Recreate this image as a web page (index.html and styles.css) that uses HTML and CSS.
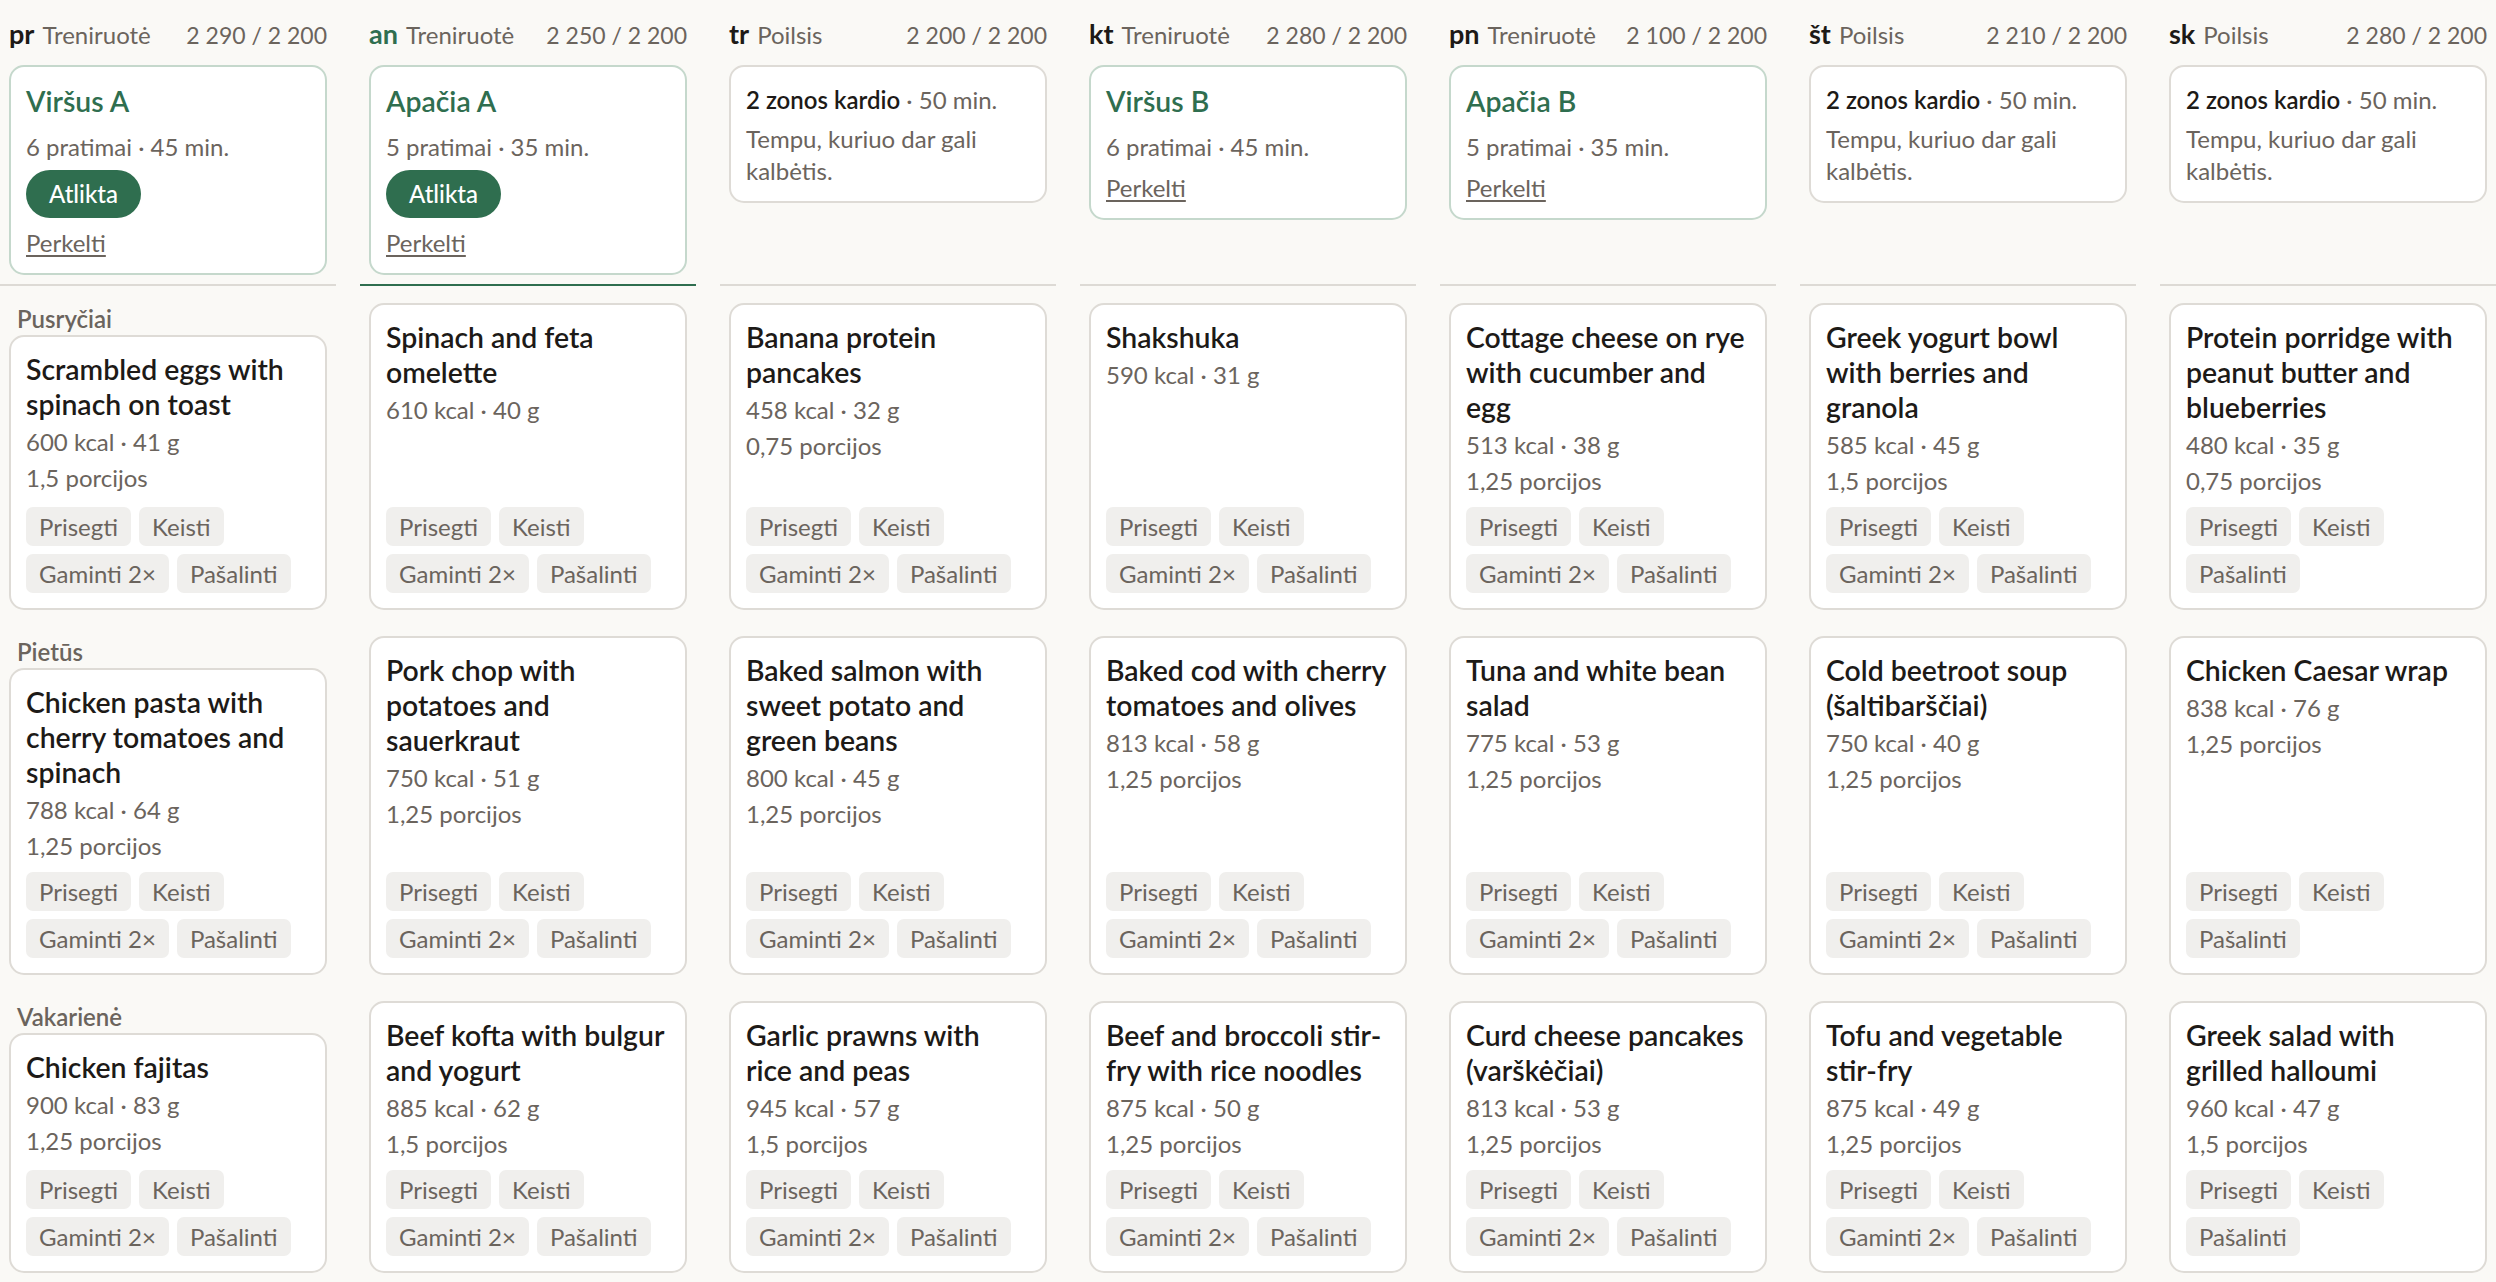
FILE: index.html
```html
<!DOCTYPE html>
<html lang="lt">
<head>
	<meta charset="UTF-8">
	<meta name="viewport" content="width=device-width, initial-scale=1.0">
	<title>Savaitės planas</title>
	<link rel="stylesheet" href="styles.css">
</head>
<body>
	<main class="week">
		<!-- Dienų antraštės ir treniruotės -->
		<section class="day-top">
			<div class="day-head">
				<span><span class="day-name">pr</span><span class="day-type">Treniruotė</span></span>
				<span class="day-total">2&nbsp;290 / 2&nbsp;200</span>
			</div>
			<div class="card workout">
				<h2 class="workout-title">Viršus A</h2>
				<p class="workout-info">6 pratimai · 45 min.</p>
				<button class="done-btn">Atlikta</button>
				<a href="#" class="move-link">Perkelti</a>
			</div>
		</section>
		<section class="day-top today">
			<div class="day-head">
				<span><span class="day-name">an</span><span class="day-type">Treniruotė</span></span>
				<span class="day-total">2&nbsp;250 / 2&nbsp;200</span>
			</div>
			<div class="card workout">
				<h2 class="workout-title">Apačia A</h2>
				<p class="workout-info">5 pratimai · 35 min.</p>
				<button class="done-btn">Atlikta</button>
				<a href="#" class="move-link">Perkelti</a>
			</div>
		</section>
		<section class="day-top">
			<div class="day-head">
				<span><span class="day-name">tr</span><span class="day-type">Poilsis</span></span>
				<span class="day-total">2&nbsp;200 / 2&nbsp;200</span>
			</div>
			<div class="card rest">
				<p class="rest-title"><strong>2 zonos kardio</strong> · 50 min.</p>
				<p class="rest-note">Tempu, kuriuo dar gali kalbėtis.</p>
			</div>
		</section>
		<section class="day-top">
			<div class="day-head">
				<span><span class="day-name">kt</span><span class="day-type">Treniruotė</span></span>
				<span class="day-total">2&nbsp;280 / 2&nbsp;200</span>
			</div>
			<div class="card workout">
				<h2 class="workout-title">Viršus B</h2>
				<p class="workout-info">6 pratimai · 45 min.</p>
				<a href="#" class="move-link">Perkelti</a>
			</div>
		</section>
		<section class="day-top">
			<div class="day-head">
				<span><span class="day-name">pn</span><span class="day-type">Treniruotė</span></span>
				<span class="day-total">2&nbsp;100 / 2&nbsp;200</span>
			</div>
			<div class="card workout">
				<h2 class="workout-title">Apačia B</h2>
				<p class="workout-info">5 pratimai · 35 min.</p>
				<a href="#" class="move-link">Perkelti</a>
			</div>
		</section>
		<section class="day-top">
			<div class="day-head">
				<span><span class="day-name">št</span><span class="day-type">Poilsis</span></span>
				<span class="day-total">2&nbsp;210 / 2&nbsp;200</span>
			</div>
			<div class="card rest">
				<p class="rest-title"><strong>2 zonos kardio</strong> · 50 min.</p>
				<p class="rest-note">Tempu, kuriuo dar gali kalbėtis.</p>
			</div>
		</section>
		<section class="day-top">
			<div class="day-head">
				<span><span class="day-name">sk</span><span class="day-type">Poilsis</span></span>
				<span class="day-total">2&nbsp;280 / 2&nbsp;200</span>
			</div>
			<div class="card rest">
				<p class="rest-title"><strong>2 zonos kardio</strong> · 50 min.</p>
				<p class="rest-note">Tempu, kuriuo dar gali kalbėtis.</p>
			</div>
		</section>

		<!-- Pusryčiai -->
		<div class="meal-cell">
			<h3 class="meal-label">Pusryčiai</h3>
			<article class="card meal">
				<h4 class="meal-title">Scrambled eggs with spinach on toast</h4>
				<p class="meal-meta">600 kcal · 41 g</p>
				<p class="meal-meta">1,5 porcijos</p>
				<div class="chips">
					<button class="chip">Prisegti</button><button class="chip">Keisti</button>
					<button class="chip">Gaminti 2×</button><button class="chip">Pašalinti</button>
				</div>
			</article>
		</div>
		<div class="meal-cell">
			<article class="card meal">
				<h4 class="meal-title">Spinach and feta omelette</h4>
				<p class="meal-meta">610 kcal · 40 g</p>
				<div class="chips">
					<button class="chip">Prisegti</button><button class="chip">Keisti</button>
					<button class="chip">Gaminti 2×</button><button class="chip">Pašalinti</button>
				</div>
			</article>
		</div>
		<div class="meal-cell">
			<article class="card meal">
				<h4 class="meal-title">Banana protein pancakes</h4>
				<p class="meal-meta">458 kcal · 32 g</p>
				<p class="meal-meta">0,75 porcijos</p>
				<div class="chips">
					<button class="chip">Prisegti</button><button class="chip">Keisti</button>
					<button class="chip">Gaminti 2×</button><button class="chip">Pašalinti</button>
				</div>
			</article>
		</div>
		<div class="meal-cell">
			<article class="card meal">
				<h4 class="meal-title">Shakshuka</h4>
				<p class="meal-meta">590 kcal · 31 g</p>
				<div class="chips">
					<button class="chip">Prisegti</button><button class="chip">Keisti</button>
					<button class="chip">Gaminti 2×</button><button class="chip">Pašalinti</button>
				</div>
			</article>
		</div>
		<div class="meal-cell">
			<article class="card meal">
				<h4 class="meal-title">Cottage cheese on rye with cucumber and egg</h4>
				<p class="meal-meta">513 kcal · 38 g</p>
				<p class="meal-meta">1,25 porcijos</p>
				<div class="chips">
					<button class="chip">Prisegti</button><button class="chip">Keisti</button>
					<button class="chip">Gaminti 2×</button><button class="chip">Pašalinti</button>
				</div>
			</article>
		</div>
		<div class="meal-cell">
			<article class="card meal">
				<h4 class="meal-title">Greek yogurt bowl with berries and granola</h4>
				<p class="meal-meta">585 kcal · 45 g</p>
				<p class="meal-meta">1,5 porcijos</p>
				<div class="chips">
					<button class="chip">Prisegti</button><button class="chip">Keisti</button>
					<button class="chip">Gaminti 2×</button><button class="chip">Pašalinti</button>
				</div>
			</article>
		</div>
		<div class="meal-cell">
			<article class="card meal">
				<h4 class="meal-title">Protein porridge with peanut butter and blueberries</h4>
				<p class="meal-meta">480 kcal · 35 g</p>
				<p class="meal-meta">0,75 porcijos</p>
				<div class="chips">
					<button class="chip">Prisegti</button><button class="chip">Keisti</button>
					<button class="chip">Pašalinti</button>
				</div>
			</article>
		</div>

		<!-- Pietūs -->
		<div class="meal-cell">
			<h3 class="meal-label">Pietūs</h3>
			<article class="card meal">
				<h4 class="meal-title">Chicken pasta with cherry tomatoes and spinach</h4>
				<p class="meal-meta">788 kcal · 64 g</p>
				<p class="meal-meta">1,25 porcijos</p>
				<div class="chips">
					<button class="chip">Prisegti</button><button class="chip">Keisti</button>
					<button class="chip">Gaminti 2×</button><button class="chip">Pašalinti</button>
				</div>
			</article>
		</div>
		<div class="meal-cell">
			<article class="card meal">
				<h4 class="meal-title">Pork chop with potatoes and sauerkraut</h4>
				<p class="meal-meta">750 kcal · 51 g</p>
				<p class="meal-meta">1,25 porcijos</p>
				<div class="chips">
					<button class="chip">Prisegti</button><button class="chip">Keisti</button>
					<button class="chip">Gaminti 2×</button><button class="chip">Pašalinti</button>
				</div>
			</article>
		</div>
		<div class="meal-cell">
			<article class="card meal">
				<h4 class="meal-title">Baked salmon with sweet potato and green beans</h4>
				<p class="meal-meta">800 kcal · 45 g</p>
				<p class="meal-meta">1,25 porcijos</p>
				<div class="chips">
					<button class="chip">Prisegti</button><button class="chip">Keisti</button>
					<button class="chip">Gaminti 2×</button><button class="chip">Pašalinti</button>
				</div>
			</article>
		</div>
		<div class="meal-cell">
			<article class="card meal">
				<h4 class="meal-title">Baked cod with cherry tomatoes and olives</h4>
				<p class="meal-meta">813 kcal · 58 g</p>
				<p class="meal-meta">1,25 porcijos</p>
				<div class="chips">
					<button class="chip">Prisegti</button><button class="chip">Keisti</button>
					<button class="chip">Gaminti 2×</button><button class="chip">Pašalinti</button>
				</div>
			</article>
		</div>
		<div class="meal-cell">
			<article class="card meal">
				<h4 class="meal-title">Tuna and white bean salad</h4>
				<p class="meal-meta">775 kcal · 53 g</p>
				<p class="meal-meta">1,25 porcijos</p>
				<div class="chips">
					<button class="chip">Prisegti</button><button class="chip">Keisti</button>
					<button class="chip">Gaminti 2×</button><button class="chip">Pašalinti</button>
				</div>
			</article>
		</div>
		<div class="meal-cell">
			<article class="card meal">
				<h4 class="meal-title">Cold beetroot soup (šaltibarščiai)</h4>
				<p class="meal-meta">750 kcal · 40 g</p>
				<p class="meal-meta">1,25 porcijos</p>
				<div class="chips">
					<button class="chip">Prisegti</button><button class="chip">Keisti</button>
					<button class="chip">Gaminti 2×</button><button class="chip">Pašalinti</button>
				</div>
			</article>
		</div>
		<div class="meal-cell">
			<article class="card meal">
				<h4 class="meal-title">Chicken Caesar wrap</h4>
				<p class="meal-meta">838 kcal · 76 g</p>
				<p class="meal-meta">1,25 porcijos</p>
				<div class="chips">
					<button class="chip">Prisegti</button><button class="chip">Keisti</button>
					<button class="chip">Pašalinti</button>
				</div>
			</article>
		</div>

		<!-- Vakarienė -->
		<div class="meal-cell">
			<h3 class="meal-label">Vakarienė</h3>
			<article class="card meal">
				<h4 class="meal-title">Chicken fajitas</h4>
				<p class="meal-meta">900 kcal · 83 g</p>
				<p class="meal-meta">1,25 porcijos</p>
				<div class="chips">
					<button class="chip">Prisegti</button><button class="chip">Keisti</button>
					<button class="chip">Gaminti 2×</button><button class="chip">Pašalinti</button>
				</div>
			</article>
		</div>
		<div class="meal-cell">
			<article class="card meal">
				<h4 class="meal-title">Beef kofta with bulgur and yogurt</h4>
				<p class="meal-meta">885 kcal · 62 g</p>
				<p class="meal-meta">1,5 porcijos</p>
				<div class="chips">
					<button class="chip">Prisegti</button><button class="chip">Keisti</button>
					<button class="chip">Gaminti 2×</button><button class="chip">Pašalinti</button>
				</div>
			</article>
		</div>
		<div class="meal-cell">
			<article class="card meal">
				<h4 class="meal-title">Garlic prawns with rice and peas</h4>
				<p class="meal-meta">945 kcal · 57 g</p>
				<p class="meal-meta">1,5 porcijos</p>
				<div class="chips">
					<button class="chip">Prisegti</button><button class="chip">Keisti</button>
					<button class="chip">Gaminti 2×</button><button class="chip">Pašalinti</button>
				</div>
			</article>
		</div>
		<div class="meal-cell">
			<article class="card meal">
				<h4 class="meal-title">Beef and broccoli stir-fry with rice noodles</h4>
				<p class="meal-meta">875 kcal · 50 g</p>
				<p class="meal-meta">1,25 porcijos</p>
				<div class="chips">
					<button class="chip">Prisegti</button><button class="chip">Keisti</button>
					<button class="chip">Gaminti 2×</button><button class="chip">Pašalinti</button>
				</div>
			</article>
		</div>
		<div class="meal-cell">
			<article class="card meal">
				<h4 class="meal-title">Curd cheese pancakes (varškėčiai)</h4>
				<p class="meal-meta">813 kcal · 53 g</p>
				<p class="meal-meta">1,25 porcijos</p>
				<div class="chips">
					<button class="chip">Prisegti</button><button class="chip">Keisti</button>
					<button class="chip">Gaminti 2×</button><button class="chip">Pašalinti</button>
				</div>
			</article>
		</div>
		<div class="meal-cell">
			<article class="card meal">
				<h4 class="meal-title">Tofu and vegetable stir-fry</h4>
				<p class="meal-meta">875 kcal · 49 g</p>
				<p class="meal-meta">1,25 porcijos</p>
				<div class="chips">
					<button class="chip">Prisegti</button><button class="chip">Keisti</button>
					<button class="chip">Gaminti 2×</button><button class="chip">Pašalinti</button>
				</div>
			</article>
		</div>
		<div class="meal-cell">
			<article class="card meal">
				<h4 class="meal-title">Greek salad with grilled halloumi</h4>
				<p class="meal-meta">960 kcal · 47 g</p>
				<p class="meal-meta">1,5 porcijos</p>
				<div class="chips">
					<button class="chip">Prisegti</button><button class="chip">Keisti</button>
					<button class="chip">Pašalinti</button>
				</div>
			</article>
		</div>
	</main>
</body>
</html>
```

FILE: styles.css
```css
*,
*::before,
*::after {
	box-sizing: border-box;
	margin: 0;
	padding: 0;
}

h1,
h2,
h3,
h4 {
	font-weight: inherit;
	font-size: inherit;
}

body {
	font-family: Lato, "Noto Sans", sans-serif;
	font-size: 24px;
	line-height: 32px;
	background-color: #faf9f6;
	color: #6b645d;
}

button {
	font: inherit;
	color: inherit;
	border: none;
	cursor: pointer;
}

/* savaitės tinklelis: 7 dienos, eilutės - treniruotė ir valgiai */
.week {
	display: grid;
	grid-template-columns: repeat(7, 1fr);
	column-gap: 24px;
	row-gap: 17px;
	padding-top: 19px;
}

.day-top {
	padding: 0 9px 9px;
	border-bottom: 2px solid #dddad5;
}

.day-top.today {
	border-bottom-color: #2f6e4f;
}

.day-head {
	display: flex;
	align-items: baseline;
	justify-content: space-between;
	height: 30px;
	line-height: 30px;
	margin-bottom: 16px;
	white-space: nowrap;
}

.day-name {
	font-size: 27px;
	font-weight: 700;
	color: #1d1a17;
	margin-right: 8px;
}

.today .day-name {
	color: #2f6e4f;
}

.day-total {
	font-size: 23px;
}

.card {
	background-color: #fff;
	border: 2px solid #dedbd6;
	border-radius: 15px;
}

/* treniruotės kortelė */
.workout {
	display: flex;
	flex-direction: column;
	align-items: flex-start;
	border-color: #c5d8cc;
	padding: 17px 15px 14px;
}

.workout-title {
	font-size: 28.4px;
	line-height: 35px;
	font-weight: 600;
	color: #2f6e4f;
}

.workout-info {
	margin-top: 12px;
}

.done-btn {
	margin-top: 7px;
	height: 48px;
	padding: 0 23px;
	border-radius: 24px;
	background-color: #2f6e4f;
	color: #fff;
	font-weight: 500;
}

.move-link {
	margin-top: 9px;
	color: inherit;
	text-decoration: underline;
	text-underline-offset: 3px;
}

/* poilsio diena */
.rest {
	padding: 17px 15px 14px;
}

.rest-title strong {
	font-weight: 600;
	color: #1d1a17;
}

.rest-note {
	margin-top: 7px;
}

/* valgiai */
.meal-cell {
	display: flex;
	flex-direction: column;
	padding: 0 9px 9px;
}

.meal-label {
	padding-left: 8px;
	font-weight: 600;
}

.meal {
	flex: 1;
	display: flex;
	flex-direction: column;
	padding: 15px;
}

.meal-title {
	font-size: 28.4px;
	line-height: 35px;
	font-weight: 600;
	color: #1d1a17;
}

.meal-meta {
	line-height: 36px;
}

.meal-title + .meal-meta {
	margin-top: 2px;
}

.chips {
	margin-top: auto;
	padding-top: 8px;
	display: flex;
	flex-wrap: wrap;
	gap: 8px;
}

.chip {
	height: 39px;
	padding: 0 13px;
	border-radius: 7px;
	background-color: #f0efed;
	line-height: 39px;
}
```
